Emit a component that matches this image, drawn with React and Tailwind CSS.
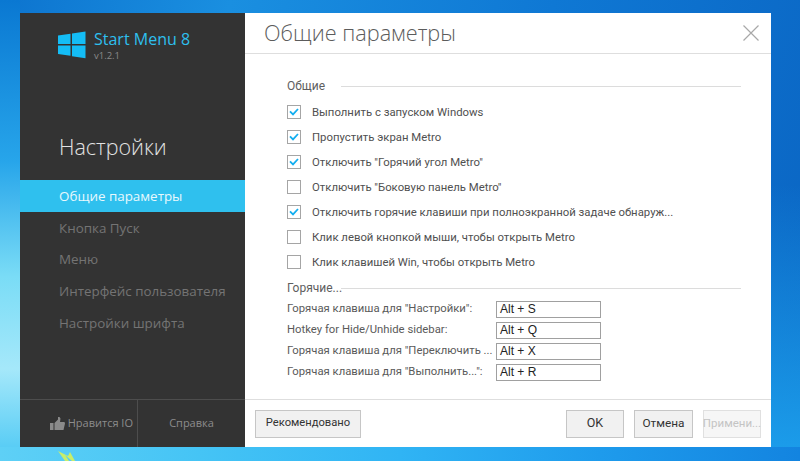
const font = { fontFamily: '"Open Sans","Noto Sans",sans-serif' };
const ui = { fontFamily: 'Roboto,"Noto Sans",sans-serif' };

function WinLogo() {
  return (
    <svg width="28" height="28" viewBox="0 0 28 28" className="shrink-0">
      <path fill="#14bdf6" d="M0 4.5 L12.5 2.8 V13 H0 Z M14 2.6 L27.5 0.5 V13 H14 Z M0 14.5 H12.5 V24.8 L0 23 Z M14 14.5 H27.5 V27.2 L14 25.2 Z" />
    </svg>
  );
}

function Check({ checked, label, mb }) {
  return (
    <div className={`flex items-center h-[14px] ${mb}`}>
      <div className="w-[14px] h-[14px] border border-[#a5a5a5] bg-white flex items-center justify-center shrink-0">
        {checked && (
          <svg width="10" height="8" viewBox="0 0 10 8">
            <path d="M1 3.4 L4 6.4 L9 1" fill="none" stroke="#12aef0" strokeWidth="1.8" />
          </svg>
        )}
      </div>
      <span className="ml-[11px] text-[11.35px] text-[#505050] whitespace-nowrap" style={ui}>{label}</span>
    </div>
  );
}

function Hotkey({ label, value }) {
  return (
    <div className="flex items-center h-[17px] mb-[4px]">
      <span className="w-[209px] text-[11.3px] text-[#5a5a5a] whitespace-nowrap overflow-hidden" style={ui}>{label}</span>
      <div className="w-[105px] h-[17px] border border-[#a0a0a0] bg-white pl-[3px] text-[12px] leading-[14px] text-[#222]" style={{ fontFamily: '"Liberation Sans",sans-serif' }}>{value}</div>
    </div>
  );
}

function Btn({ children, className }) {
  return (
    <div className={`h-[28px] flex items-center justify-center border border-[#c6c6c6] bg-[#f1f1f1] text-[#333] ${className}`} style={ui}>{children}</div>
  );
}

function Group({ title, line }) {
  return (
    <div className={`flex items-center h-[14px] ${line}`}>
      <span className="w-[54px] text-[12px] text-[#5e5e5e] whitespace-nowrap" style={ui}>{title}</span>
      <div className="flex-1 h-px bg-[#dcdcdc]" />
    </div>
  );
}

export default function App() {
  const items = [
    ["Кнопка Пуск", "h-[32px]"],
    ["Меню", "h-[31px]"],
    ["Интерфейс пользователя", "h-[32px]"],
    ["Настройки шрифта", "h-[32px]"],
  ];
  return (
    <div className="relative w-[800px] h-[461px] overflow-hidden pt-[13px] pl-[20px] bg-[linear-gradient(105deg,#0d74cf_0%,#1a8fe0_25%,#0f78d4_60%,#0a64c2_100%)]" style={font}>
      <div className="absolute inset-0 bg-[linear-gradient(180deg,rgba(40,130,220,0)_0%,rgba(40,130,220,0)_40%,rgba(30,165,240,0.9)_100%)]" />
      <div className="absolute left-0 top-0 w-[20px] h-[461px] bg-[linear-gradient(180deg,#0a78d2_0%,#27a5ea_35%,#7adcf6_60%,#a5e8fa_80%,#4cc8f4_100%)]" />
      <div className="absolute left-0 top-[447px] w-[800px] h-[14px] bg-[linear-gradient(90deg,#5ed0f6_0%,#45c4f5_25%,#30b4f4_50%,#1e9bec_75%,#1384e0_100%)]" />
      <svg className="absolute left-[55px] top-[449px]" width="30" height="12" viewBox="0 0 30 12">
        <path d="M3 2 L10 12 L14 12 L10 6 L17 12 L20 12 L15 3 L13 7 Z" fill="#c8ee6a" />
      </svg>
      <div className="relative flex w-[751px] h-[434px] bg-white">
        <div className="w-[225px] h-full bg-[#333333] flex flex-col">
          <div className="flex pl-[38px] pt-[18px] h-[120px]">
            <WinLogo />
            <div className="ml-[8px] -mt-[2px]">
              <div className="text-[16px] leading-[20px] text-[#2ebfee] whitespace-nowrap">Start Menu 8</div>
              <div className="text-[9.5px] leading-[14px] text-[#8a8a8a]">v1.2.1</div>
            </div>
          </div>
          <div className="h-[47px] pl-[39px] text-[21.5px] leading-[28px] font-light text-[#e2e2e2] whitespace-nowrap">Настройки</div>
          <div className="h-[32px] bg-[#2fc0ee] pl-[39px] flex items-center text-[13.4px] text-[#e8f8fd]">Общие параметры</div>
          {items.map(([t, h]) => (
            <div key={t} className={`${h} pl-[39px] flex items-center text-[13.4px] text-[#747474] whitespace-nowrap`}>{t}</div>
          ))}
          <div className="flex-1" />
          <div className="h-[48px] flex border-t border-[#4d4d4d]">
            <div className="w-[118px] flex items-center justify-end border-r border-[#4d4d4d] pr-[4px] text-[11px] text-[#8c8c8c]">
              <svg width="15" height="13" viewBox="0 0 15 13" className="mr-[3px]">
                <path fill="#8a8a8a" d="M0 6 H3.5 V13 H0 Z M4.5 6 L8 2.5 V0 H9.5 L10.5 1.5 L10 5 H14.5 L15 6.5 L13.5 13 H4.5 Z" />
              </svg>
              Нравится IO
            </div>
            <div className="flex-1 flex items-center justify-center text-[11px] text-[#8c8c8c]">Справка</div>
          </div>
        </div>
        <div className="flex-1 flex flex-col">
          <div className="h-[41px] border-b border-[#dedede] pl-[19px] pr-[12px] flex items-center justify-between">
            <span className="text-[21.7px] font-light text-[#5c5c5c] whitespace-nowrap">Общие параметры</span>
            <svg width="16" height="16" viewBox="0 0 16 16">
              <path d="M0.5 0.5 L15.5 15.5 M15.5 0.5 L0.5 15.5" stroke="#a8a8a8" strokeWidth="1.2" fill="none" />
            </svg>
          </div>
          <div className="flex-1 pl-[42px] pr-[30px] pt-[25px]">
            <Group title="Общие" line="mb-[12px]" />
            <Check checked label="Выполнить с запуском Windows" mb="mb-[11px]" />
            <Check checked label="Пропустить экран Metro" mb="mb-[11px]" />
            <Check checked label={'Отключить "Горячий угол Metro"'} mb="mb-[11px]" />
            <Check label={'Отключить "Боковую панель Metro"'} mb="mb-[11px]" />
            <Check checked label="Отключить горячие клавиши при полноэкранной задаче обнаруж..." mb="mb-[11px]" />
            <Check label="Клик левой кнопкой мыши, чтобы открыть Metro" mb="mb-[11px]" />
            <Check label="Клик клавишей Win, чтобы открыть Metro" mb="mb-[12px]" />
            <Group title="Горячие..." line="mb-[6px]" />
            <Hotkey label={'Горячая клавиша для "Настройки":'} value="Alt + S" />
            <Hotkey label="Hotkey for Hide/Unhide sidebar:" value="Alt + Q" />
            <Hotkey label={'Горячая клавиша для "Переключить ...'} value="Alt + X" />
            <Hotkey label={'Горячая клавиша для "Выполнить...":'} value="Alt + R" />
          </div>
          <div className="h-[48px] border-t border-[#dedede] pl-[10px] pr-[10px] flex items-center">
            <Btn className="w-[106px] text-[11.2px]">Рекомендовано</Btn>
            <div className="flex-1" />
            <Btn className="w-[58px] mr-[10px] text-[12.5px]">OK</Btn>
            <Btn className="w-[59px] mr-[10px] text-[11.8px]">Отмена</Btn>
            <Btn className="w-[58px] !text-[11.5px] !text-[#c4c4c4] !bg-[#f6f6f6] !border-[#e0e0e0] whitespace-nowrap">Примени...</Btn>
          </div>
        </div>
      </div>
    </div>
  );
}
